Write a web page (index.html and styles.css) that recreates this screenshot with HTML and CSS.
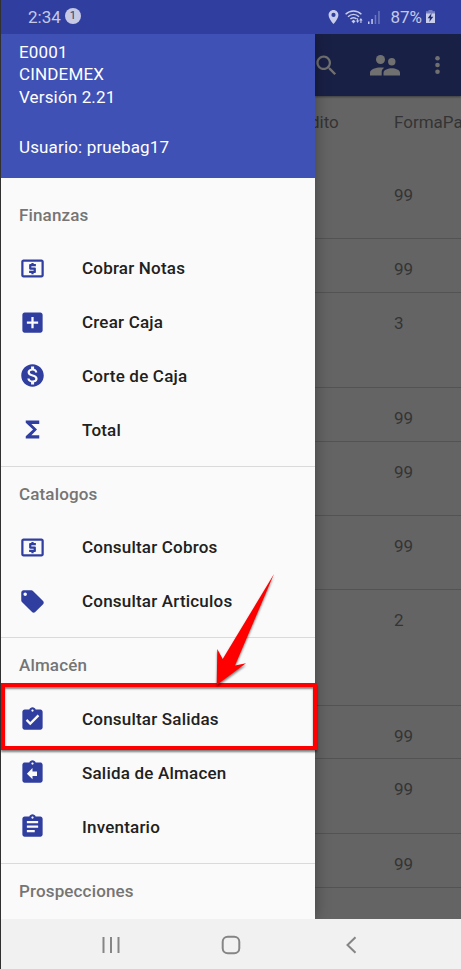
FILE: index.html
```html
<!DOCTYPE html>
<html lang="es">
<head>
  <meta charset="utf-8">
  <title>CINDEMEX</title>
  <link rel="stylesheet" href="styles.css">
</head>
<body>
  <header class="status-bar">
    <span class="time">2:34</span>
    <span class="badge">1</span>
    <div class="status-icons">
      <svg class="pin" viewBox="5 2 14 20"><path d="M12 2C8.13 2 5 5.13 5 9c0 5.25 7 13 7 13s7-7.75 7-13c0-3.87-3.13-7-7-7zm0 10a3 3 0 1 1 0-6 3 3 0 0 1 0 6z"/></svg>
      <svg class="wifi" viewBox="0 0 18 14">
        <g fill="none" stroke="#c9cdec" stroke-width="1.4"><path d="M.6 4.3C5-.1 12-.1 16.400 4.300M3 6.700c3.100-3.100 7.900-3.100 11 0M5.400 9.100c1.700-1.800 4.500-1.800 6.200 0"/></g>
        <path d="M8.500 9.800l2 1.500-2 2.200-2-2.200z"/>
        <path d="M11 10.500h1.100V8.300h1v2.200h1.100L12.600 13zM14.200 10.400L15.900 8l1.700 2.400h-1.100v2.500h-1.100v-2.500z"/>
      </svg>
      <svg class="signal" viewBox="0 0 12 13"><path d="M0 10.500h1.500V13H0zM3.300 8h1.500v5H3.300z"/><path opacity=".4" d="M6.700 4h1.500v9H6.700zM10.200 0h1.500v13h-1.500z"/></svg>
      <span class="percent">87%</span>
      <svg class="battery" viewBox="0 0 9 13"><path opacity=".45" d="M2.500 0h4v1.300H9V4H0V1.300h2.500z"/><path d="M0 3.500h9V13H0z"/><path fill="#20296e" d="M5.600 3L1.700 8.200h2.200L3.300 12l4-5.300H5z"/></svg>
    </div>
  </header>

  <main class="screen">
    <nav class="drawer">
      <div class="account">
        <p>E0001</p>
        <p>CINDEMEX</p>
        <p>Versión 2.21</p>
        <p class="user">Usuario: pruebag17</p>
      </div>

      <section class="group">
        <h2>Finanzas</h2>
        <a class="item">
          <svg viewBox="0 0 24 24"><path d="M11 17h2v-1h1c.55 0 1-.45 1-1v-3c0-.55-.45-1-1-1h-3v-1h4V8h-2V7h-2v1h-1c-.55 0-1 .45-1 1v3c0 .55.45 1 1 1h3v1H9v2h2v1zm9-13H4c-1.110 0-1.990.89-1.990 2L2 18c0 1.110.89 2 2 2h16c1.110 0 2-.89 2-2V6c0-1.110-.89-2-2-2zm0 14H4V6h16v12z"/></svg>
          <span>Cobrar Notas</span>
        </a>
        <a class="item">
          <svg viewBox="0 0 24 24"><path d="M19 3H5c-1.110 0-2 .9-2 2v14c0 1.100.89 2 2 2h14c1.100 0 2-.9 2-2V5c0-1.100-.9-2-2-2zm-2 10h-4v4h-2v-4H7v-2h4V7h2v4h4v2z"/></svg>
          <span>Crear Caja</span>
        </a>
        <a class="item">
          <svg viewBox="0 0 24 24"><path d="M12 2C6.480 2 2 6.480 2 12s4.480 10 10 10 10-4.480 10-10S17.520 2 12 2zm1.410 16.090V20h-2.670v-1.930c-1.710-.36-3.160-1.460-3.270-3.400h1.960c.1 1.050.82 1.870 2.650 1.870 1.960 0 2.400-.98 2.400-1.590 0-.83-.44-1.610-2.670-2.140-2.480-.6-4.180-1.620-4.180-3.670 0-1.720 1.390-2.840 3.110-3.210V4h2.670v1.950c1.860.45 2.790 1.860 2.850 3.390H14.300c-.05-1.110-.64-1.870-2.220-1.870-1.500 0-2.400.68-2.400 1.640 0 .84.65 1.390 2.670 1.910s4.180 1.390 4.180 3.910c-.01 1.830-1.380 2.830-3.120 3.160z"/></svg>
          <span>Corte de Caja</span>
        </a>
        <a class="item">
          <svg viewBox="0 0 24 24"><path d="M18 4H6v2l6.500 6L6 18v2h12v-3h-7l5-5-5-5h7z"/></svg>
          <span>Total</span>
        </a>
      </section>

      <section class="group">
        <h2>Catalogos</h2>
        <a class="item">
          <svg viewBox="0 0 24 24"><path d="M11 17h2v-1h1c.55 0 1-.45 1-1v-3c0-.55-.45-1-1-1h-3v-1h4V8h-2V7h-2v1h-1c-.55 0-1 .45-1 1v3c0 .55.45 1 1 1h3v1H9v2h2v1zm9-13H4c-1.110 0-1.990.89-1.990 2L2 18c0 1.110.89 2 2 2h16c1.110 0 2-.89 2-2V6c0-1.110-.89-2-2-2zm0 14H4V6h16v12z"/></svg>
          <span>Consultar Cobros</span>
        </a>
        <a class="item">
          <svg viewBox="0 0 24 24"><path d="M21.410 11.580l-9-9C12.050 2.220 11.550 2 11 2H4c-1.100 0-2 .9-2 2v7c0 .55.22 1.050.59 1.420l9 9c.36.36.86.58 1.410.58.55 0 1.050-.22 1.410-.59l7-7c.37-.36.59-.86.59-1.410 0-.55-.23-1.060-.59-1.420zM5.500 7C4.670 7 4 6.330 4 5.500S4.670 4 5.500 4 7 4.670 7 5.500 6.330 7 5.500 7z"/></svg>
          <span>Consultar Articulos</span>
        </a>
      </section>

      <section class="group">
        <h2>Almacén</h2>
        <a class="item selected">
          <svg viewBox="0 0 24 24"><path d="M19 3h-4.180C14.400 1.840 13.300 1 12 1c-1.300 0-2.400.84-2.820 2H5c-1.100 0-2 .9-2 2v14c0 1.100.9 2 2 2h14c1.100 0 2-.9 2-2V5c0-1.100-.9-2-2-2zm-7 0c.55 0 1 .45 1 1s-.45 1-1 1-1-.45-1-1 .45-1 1-1zm-2 14l-4-4 1.410-1.410L10 14.170l6.590-6.590L18 9l-8 8z"/></svg>
          <span>Consultar Salidas</span>
        </a>
        <a class="item">
          <svg viewBox="0 0 24 24"><path d="M19 3h-4.180C14.400 1.840 13.300 1 12 1c-1.300 0-2.400.84-2.820 2H5c-1.100 0-2 .9-2 2v14c0 1.100.9 2 2 2h14c1.100 0 2-.9 2-2V5c0-1.100-.9-2-2-2zm-7 0c.55 0 1 .45 1 1s-.45 1-1 1-1-.45-1-1 .45-1 1-1zm4 12h-4v3l-5-5 5-5v3h4v4z"/></svg>
          <span>Salida de Almacen</span>
        </a>
        <a class="item">
          <svg viewBox="0 0 24 24"><path d="M19 3h-4.180C14.400 1.840 13.300 1 12 1c-1.300 0-2.400.84-2.820 2H5c-1.100 0-2 .9-2 2v14c0 1.100.9 2 2 2h14c1.100 0 2-.9 2-2V5c0-1.100-.9-2-2-2zm-7 0c.55 0 1 .45 1 1s-.45 1-1 1-1-.45-1-1 .45-1 1-1zm2 14H7v-2h7v2zm3-4H7v-2h10v2zm0-4H7V7h10v2z"/></svg>
          <span>Inventario</span>
        </a>
      </section>

      <section class="group">
        <h2>Prospecciones</h2>
      </section>
    </nav>

    <div class="content">
      <div class="app-bar">
        <svg class="search" viewBox="0 0 24 24"><path d="M15.500 14h-.79l-.28-.27C15.410 12.590 16 11.110 16 9.500 16 5.910 13.090 3 9.500 3S3 5.910 3 9.500 5.910 16 9.500 16c1.610 0 3.090-.59 4.230-1.570l.27.28v.79l5 4.990L20.490 19l-4.990-5zm-6 0C7.010 14 5 11.990 5 9.500S7.010 5 9.500 5 14 7.010 14 9.500 11.990 14 9.500 14z"/></svg>
        <svg class="people" viewBox="0 0 30 21"><circle cx="10.500" cy="4.500" r="4.500"/><circle cx="21.800" cy="6.800" r="3.700"/><path d="M0 20.500v-2.800c0-3.500 6-5.300 10.500-5.300 1.300 0 2.600.1 3.800.4-2 1.200-2.600 2.800-2.600 4.600v3.100zM13.500 20.500v-2.700c0-3 4.800-4.500 8.300-4.500s8.200 1.500 8.200 4.500v2.700z"/></svg>
        <svg class="more" viewBox="0 0 5 18"><circle cx="2.500" cy="2.300" r="2.300"/><circle cx="2.500" cy="9" r="2.300"/><circle cx="2.500" cy="15.700" r="2.300"/></svg>
      </div>
      <div class="table">
        <div class="row head"><span class="credit">dito</span><span>FormaPa</span></div>
        <div class="row r74"><span></span><span>99</span></div>
        <div class="row r54"><span></span><span>99</span></div>
        <div class="row r95"><span></span><span>3</span></div>
        <div class="row r54"><span></span><span>99</span></div>
        <div class="row r74"><span></span><span>99</span></div>
        <div class="row r74"><span></span><span>99</span></div>
        <div class="row r116"><span></span><span>2</span></div>
        <div class="row r53"><span></span><span>99</span></div>
        <div class="row r75"><span></span><span>99</span></div>
        <div class="row r54"><span></span><span>99</span></div>
      </div>
    </div>
  </main>

  <footer class="nav-bar">
    <svg viewBox="0 0 24 24"><path d="M4.500 4v16M12 4v16M19.500 4v16"/></svg>
    <svg viewBox="0 0 24 24"><rect x="3.700" y="3.700" width="16.600" height="16.600" rx="5"/></svg>
    <svg viewBox="0 0 24 24"><path d="M16.500 4.200L8.500 12l8 7.800"/></svg>
  </footer>

  <!-- pointer to the selected item -->
  <svg class="arrow" viewBox="0 0 60 114"><path d="M59 1L20 92.500 31 90.300 1.700 112 2.300 76 7.700 86z"/></svg>
</body>
</html>
```
FILE: styles.css
```css
* {
  box-sizing: border-box;
}

body {
  margin: 0;
  width: 461px;
  height: 969px;
  display: flex;
  flex-direction: column;
  position: relative;
  overflow: hidden;
  border-left: 1px solid #303030;
  font-family: Roboto, sans-serif;
  font-size: 17px;
}

p, h2 {
  margin: 0;
}

svg {
  display: block;
  flex: none;
}

/* STATUS BAR */
.status-bar {
  flex: none;
  height: 34px;
  display: flex;
  align-items: center;
  padding: 0 26px 1px 27px;
  background: #303f9f;
  color: #c5c9e6;
  fill: #c9cdec;
}

.badge {
  width: 16px;
  height: 16px;
  margin: -1px 0 0 4px;
  border-radius: 50%;
  background: #c5c9e6;
  color: #303a70;
  font-size: 11px;
  line-height: 16px;
  text-align: center;
}

.status-icons {
  margin-left: auto;
  display: flex;
  align-items: center;
}

.pin {
  width: 11px;
  height: 14px;
  margin-right: 6px;
}

.wifi {
  width: 18px;
  height: 14px;
  margin-right: 5px;
}

.signal {
  width: 12px;
  height: 13px;
  margin: 1px 10px 0 0;
}

.battery {
  width: 9px;
  height: 13px;
  margin-left: 4px;
}

/* DRAWER */
.screen {
  flex: none;
  height: 885px;
  display: flex;
  overflow: hidden;
}

.drawer {
  flex: none;
  width: 314px;
  background: #fafafa;
  box-shadow: 0 0 14px rgba(0, 0, 0, 0.35);
  z-index: 1;
}

.account {
  height: 144px;
  margin-bottom: 9.500px;
  padding: 7px 18px;
  background: #3f51b5;
  color: #fff;
  line-height: 22.400px;
  letter-spacing: 0.15px;
}

.user {
  margin-top: 28px;
}

.group {
  padding-bottom: 9px;
  border-bottom: 1px solid #dadada;
}

.group h2 {
  height: 53.850px;
  padding-left: 18px;
  color: #757575;
  font-size: 17px;
  font-weight: 500;
  line-height: 54px;
  letter-spacing: 0.15px;
}

.item {
  height: 53.850px;
  display: flex;
  align-items: center;
  gap: 36px;
  padding-left: 18px;
  color: #212121;
  font-size: 17px;
  font-weight: 500;
  letter-spacing: 0.2px;
}

.item svg {
  width: 27px;
  height: 27px;
  fill: #303f9f;
}

.selected {
  position: relative;
}

.selected::after {
  content: "";
  box-sizing: border-box;
  position: absolute;
  top: -9px;
  left: 0;
  width: 316px;
  height: 67px;
  border: 4px solid #f00;
  box-shadow: 0 2px 2px rgba(0, 0, 0, 0.5), inset 0 2px 2px rgba(0, 0, 0, 0.45);
}

/* CONTENT BEHIND THE DRAWER */
.content {
  flex: 1;
  min-width: 0;
  background: #646464;
  color: #343434;
}

.app-bar {
  height: 62px;
  display: flex;
  align-items: center;
  background: #192046;
  fill: #707070;
  box-shadow: 0 1px 2px rgba(0, 0, 0, 0.4);
}

.search {
  width: 27px;
  height: 27px;
  margin-left: -2px;
}

.people {
  width: 30px;
  height: 21px;
  margin-left: 30px;
}

.more {
  width: 5px;
  height: 18px;
  margin-left: 34.500px;
}

.row {
  display: grid;
  grid-template-columns: 79px 1fr;
  padding-top: 19px;
  border-bottom: 1px solid #535353;
  line-height: 22px;
  white-space: nowrap;
}

.head {
  height: 69px;
  padding-top: 15px;
  border-bottom: none;
}

.credit {
  margin-left: -5px;
}

.r53 {
  height: 53px;
}

.r54 {
  height: 54px;
}

.r74 {
  height: 74px;
}

.r75 {
  height: 75px;
}

.r95 {
  height: 95px;
}

.r116 {
  height: 116px;
}

/* NAVIGATION BAR */
.nav-bar {
  flex: 1;
  display: flex;
  align-items: center;
  justify-content: space-between;
  padding: 2px 98px 0 98px;
  background: #f1f1f1;
}

.nav-bar svg {
  width: 24px;
  height: 24px;
  fill: none;
  stroke: #858585;
  stroke-width: 2;
}

.arrow {
  position: absolute;
  top: 573px;
  left: 214px;
  width: 60px;
  height: 114px;
  fill: #f00;
  filter: drop-shadow(0 2px 1px rgba(0, 0, 0, 0.5));
  z-index: 2;
}
```
